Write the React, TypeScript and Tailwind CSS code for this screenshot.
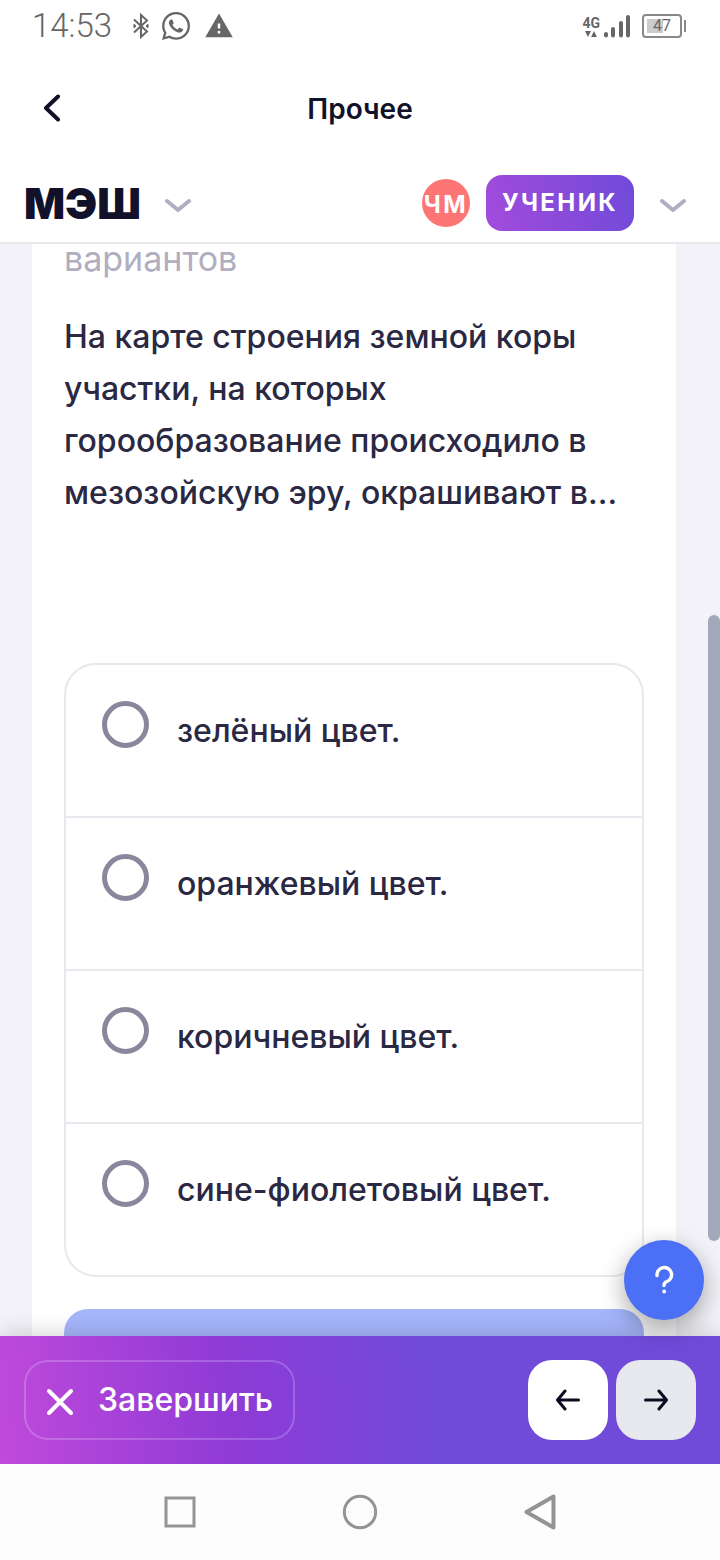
import { useState } from "react";
import { FaWhatsapp } from "react-icons/fa";
import { MdWarning } from "react-icons/md";

const options = [
  "зелёный цвет.",
  "оранжевый цвет.",
  "коричневый цвет.",
  "сине-фиолетовый цвет.",
];

function Chevron() {
  return (
    <svg width="26" height="16" viewBox="0 0 26 16" fill="none">
      <path
        d="M2 3L13 12L24 3"
        stroke="#b0aec0"
        strokeWidth="4"
        strokeLinecap="round"
        strokeLinejoin="round"
      />
    </svg>
  );
}

function StatusBar() {
  return (
    <div className="flex h-[52px] shrink-0 items-center justify-between pl-8 pr-[34px] text-[#666]">
      <div className="flex items-center">
        <span className="font-['Roboto',sans-serif] text-[33px] font-light leading-[52px]">
          14:53
        </span>
        <svg
          className="ml-5"
          width="18"
          height="26"
          viewBox="0 0 18 26"
          fill="none"
          stroke="currentColor"
          strokeWidth="2"
        >
          <path d="M2 6.5L15 18.5L9 24V2L15 7.5L2 19.5" />
          <path d="M2 11L4 13L2 15ZM16 11L14 13L16 15Z" strokeWidth="1" fill="currentColor" />
        </svg>
        <FaWhatsapp className="ml-2.5" size={32} />
        <MdWarning className="ml-3" size={30} />
      </div>
      <div className="flex items-center">
        <div className="flex flex-col items-center font-['Roboto',sans-serif] text-sm font-bold leading-4">
          4G
          <svg width="14" height="6" viewBox="0 0 14 6" fill="currentColor">
            <path d="M1 0H7L4 6ZM7 6H13L10 0Z" />
          </svg>
        </div>
        <svg
          className="ml-0.5"
          width="30"
          height="26"
          viewBox="0 0 30 26"
          fill="none"
          stroke="currentColor"
          strokeWidth="4"
          strokeLinecap="round"
        >
          <path d="M4 22.5V21M11 22.5V16M19 22.5V10M26 22.5V4" />
        </svg>
        <div className="ml-2.5 flex items-center gap-0.5">
          <div className="flex h-6 w-10 rounded border-2 border-[#888] p-[3px]">
            <div className="flex w-4 items-center whitespace-nowrap bg-[#ccc] pl-1.5 font-['Roboto',sans-serif] text-base">
              47
            </div>
          </div>
          <div className="h-3 w-0.5 bg-[#888]" />
        </div>
      </div>
    </div>
  );
}

export default function App() {
  const [answer, setAnswer] = useState("");

  return (
    <div className="flex h-screen flex-col overflow-hidden bg-white font-['Inter',sans-serif] text-[#2a2842]">
      <StatusBar />

      <div className="grid h-28 shrink-0 grid-cols-[48px_1fr_48px] items-center px-7">
        <button type="button" aria-label="Назад" className="flex size-12 items-center justify-center">
          <svg width="20" height="28" viewBox="0 0 20 28" fill="none">
            <path
              d="M16 2.5L4 14L16 25.5"
              stroke="#12112a"
              strokeWidth="4"
              strokeLinecap="round"
              strokeLinejoin="round"
            />
          </svg>
        </button>
        <h1 className="pt-0.5 text-center text-[28px] font-semibold text-[#12112a]">Прочее</h1>
      </div>

      <header className="flex h-20 shrink-0 items-center border-b-2 border-[#e7e7ee] pl-6 pr-[34px]">
        <span className="text-[43px] font-black leading-none text-[#12112a]">МЭШ</span>
        <button type="button" aria-label="Меню" className="ml-6 pt-1.5">
          <Chevron />
        </button>
        <div className="ml-auto flex size-12 items-center justify-center rounded-full bg-[#fd7575] pt-1 text-2xl font-bold tracking-widest text-white">
          ЧМ
        </div>
        <button
          type="button"
          className="ml-4 flex h-14 items-center rounded-2xl bg-[linear-gradient(75deg,#a34bdb,#704ad9)] px-4 text-2xl font-bold tracking-widest text-white"
        >
          УЧЕНИК
        </button>
        <button type="button" aria-label="Профиль" className="ml-[26px] pt-1.5">
          <Chevron />
        </button>
      </header>

      <div className="relative min-h-0 flex-1">
        <main className="h-full overflow-hidden bg-[#f3f2f8] pl-8 pr-11">
          <div className="h-full bg-white px-8">
            <p className="text-[34px] leading-[30px] text-[#b0aec0]">вариантов</p>
            <p className="mt-[37px] text-[32px] font-medium leading-[52px]">
              На карте строения земной коры участки, на которых горообразование происходило в
              мезозойскую эру, окрашивают в...
            </p>
            <div className="mt-36 divide-y-2 divide-[#e7e7ee] rounded-[32px] border-2 border-[#e7e7ee]">
              {options.map((option) => (
                <label key={option} className="flex items-start gap-7 px-9 pb-[59px] pt-9">
                  <input
                    type="radio"
                    name="answer"
                    value={option}
                    checked={answer === option}
                    onChange={() => setAnswer(option)}
                    className="size-[47px] shrink-0 appearance-none rounded-full border-[5px] border-[#88879b] checked:border-[14px] checked:border-[#4b6ff5]"
                  />
                  <span className="pt-1 text-[32px] font-medium leading-[52px]">{option}</span>
                </label>
              ))}
            </div>
            <button
              type="button"
              aria-label="Ответить"
              className="mt-8 h-20 w-full rounded-3xl bg-[#a6b6fb]"
            />
          </div>
        </main>
        <div className="absolute right-0 top-[34%] h-[626px] w-3 rounded-full bg-[#a3a8bb]" />
        <button
          type="button"
          aria-label="Помощь"
          className="absolute bottom-4 right-4 z-20 flex size-20 items-center justify-center rounded-full bg-[#4b6ff5] shadow-[0_8px_24px_rgba(0,0,0,0.35)]"
        >
          <svg width="24" height="32" viewBox="0 0 24 32" fill="none">
            <path
              d="M5 11.5A7.3 7.3 0 1 1 15 17.5Q12 18.5 12 21.5"
              stroke="white"
              strokeWidth="3.4"
              strokeLinecap="round"
            />
            <circle cx="12.2" cy="27.5" r="1.9" fill="white" />
          </svg>
        </button>
      </div>

      <footer className="z-10 flex h-32 shrink-0 items-center gap-2 bg-[linear-gradient(83deg,#c04adb,#8f3bd6_32%,#704ad9_60%)] px-6 shadow-[0_0_24px_rgba(0,0,0,0.2)]">
        <button
          type="button"
          className="mr-auto flex h-20 items-center gap-6 rounded-3xl border-2 border-white/20 px-5 text-[32px] font-medium text-white"
        >
          <svg width="28" height="32" viewBox="0 0 28 32" fill="none">
            <path d="M3 7L25 29M25 7L3 29" stroke="white" strokeWidth="4" strokeLinecap="round" />
          </svg>
          Завершить
        </button>
        <button
          type="button"
          aria-label="Предыдущий вопрос"
          className="flex size-20 items-center justify-center rounded-3xl bg-white"
        >
          <svg width="24" height="24" viewBox="0 0 24 24" fill="none">
            <path
              d="M22.5 12H2M9 3L1.5 12L9 21"
              stroke="#0b0a20"
              strokeWidth="3"
              strokeLinecap="round"
              strokeLinejoin="round"
            />
          </svg>
        </button>
        <button
          type="button"
          aria-label="Следующий вопрос"
          className="flex size-20 items-center justify-center rounded-3xl bg-[#e7e8ee]"
        >
          <svg width="24" height="24" viewBox="0 0 24 24" fill="none">
            <path
              d="M1.5 12H22M15 3L22.5 12L15 21"
              stroke="#0b0a20"
              strokeWidth="3"
              strokeLinecap="round"
              strokeLinejoin="round"
            />
          </svg>
        </button>
      </footer>

      <nav className="z-10 flex h-24 shrink-0 items-center justify-around bg-[#fdfdfd] px-[90px]">
        <button type="button" aria-label="Недавние">
          <svg width="36" height="36" viewBox="0 0 36 36" fill="none" stroke="#949494" strokeWidth="3">
            <rect x="4" y="4" width="28" height="28" />
          </svg>
        </button>
        <button type="button" aria-label="Домой">
          <svg width="36" height="36" viewBox="0 0 36 36" fill="none" stroke="#949494" strokeWidth="3">
            <circle cx="18" cy="18" r="15.7" />
          </svg>
        </button>
        <button type="button" aria-label="Назад в системе">
          <svg
            width="36"
            height="36"
            viewBox="0 0 36 36"
            fill="none"
            stroke="#949494"
            strokeWidth="4"
            strokeLinejoin="round"
          >
            <path d="M4.5 18L31.5 2.5V33.5Z" />
          </svg>
        </button>
      </nav>
    </div>
  );
}
